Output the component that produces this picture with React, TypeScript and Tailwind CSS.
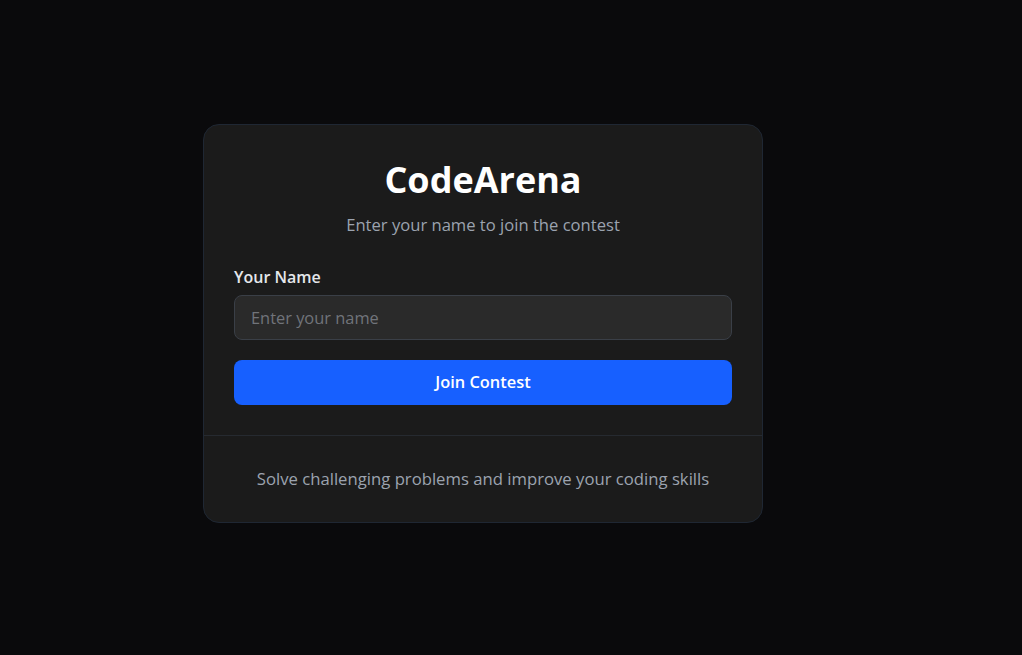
export default function App() {
  return (
    <div
      className="min-h-screen bg-[#0a0a0c] flex items-center justify-center pr-[56px] pb-[9px]"
      style={{ fontFamily: '"Open Sans", "Noto Sans", sans-serif' }}
    >
      <div className="w-[560px] bg-[#1b1b1b] border border-[#1f2733] rounded-2xl overflow-hidden">
        <div className="p-7.5">
          <h1 className="text-center text-4xl font-bold text-white leading-[50px]">CodeArena</h1>
          <p className="mt-2 text-center text-[16.6px] leading-6 text-[#9ca3af]">Enter your name to join the contest</p>

          <div className="mt-7">
            <label className="block text-base font-semibold text-[#e5e7eb] mb-1.5">Your Name</label>
            <input
              type="text"
              placeholder="Enter your name"
              className="w-full h-[45px] px-4 rounded-lg bg-[#2a2a2a] border border-[#3a3f47] text-[16.4px] text-white placeholder:text-[#71747a] outline-none"
            />
          </div>

          <button className="mt-5 w-full h-[45px] rounded-lg bg-[#1760ff] text-white text-[16.4px] font-semibold">
            Join Contest
          </button>
        </div>

        <div className="border-t border-[#262a30] p-7.5 text-center text-[16.7px] leading-[26px] text-[#9ca3af]">
          Solve challenging problems and improve your coding skills
        </div>
      </div>
    </div>
  )
}
